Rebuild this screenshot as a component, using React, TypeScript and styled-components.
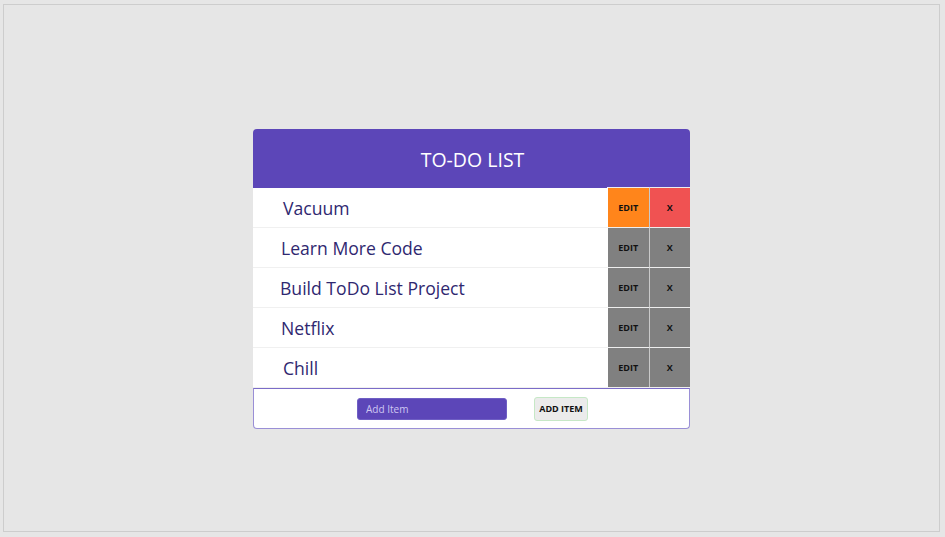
import styled, { createGlobalStyle } from 'styled-components';

const GlobalStyle = createGlobalStyle`
  html, body {
    margin: 0;
    padding: 0;
    background: #e6e6e6;
    font-family: 'Open Sans', 'Liberation Sans', sans-serif;
  }
`;

const Frame = styled.div`
  margin: 4px 0 0 3px;
  width: 937px;
  height: 528px;
  border: 1px solid #cdcdcd;
  background: #e6e6e6;
  display: flex;
  justify-content: center;
  align-items: flex-start;
  padding-top: 124px;
  box-sizing: border-box;
`;

const Card = styled.div`
  width: 437px;
  display: flex;
  flex-direction: column;
`;

const Header = styled.div`
  height: 59px;
  background: #5c46b8;
  border-radius: 4px 4px 0 0;
  color: #ffffff;
  font-size: 19.5px;
  display: flex;
  align-items: center;
  justify-content: center;
  padding: 2px 0 0 2px;
  box-sizing: border-box;
`;

const Row = styled.div`
  height: 40px;
  display: flex;
  background: #ffffff;
  border-bottom: 1px solid #f0f0f0;
  box-sizing: border-box;
`;

const ItemText = styled.div<{ $indent: number }>`
  flex: 1;
  display: flex;
  align-items: center;
  padding-left: ${(p) => p.$indent}px;
  font-size: 17.6px;
  color: #2f2870;
`;

const ActionButton = styled.button<{ $bg: string }>`
  width: 41.5px;
  height: 40px;
  margin-top: -1px;
  border: none;
  border-left: 1px solid #c9c9c9;
  border-top: 1px solid #eeeeee;
  background: ${(p) => p.$bg};
  font-family: 'Open Sans', 'Liberation Sans', sans-serif;
  font-weight: 700;
  font-size: 9px;
  color: #111111;
  padding: 0;
  box-sizing: border-box;

  &:first-of-type {
    border-left-color: #ffffff;
  }
`;

const Footer = styled.div`
  height: 41px;
  background: #ffffff;
  border: 1px solid #9a8fd6;
  border-top: 1px solid #7b6cc8;
  border-radius: 0 0 4px 4px;
  display: flex;
  align-items: center;
  justify-content: center;
  gap: 27px;
  box-sizing: border-box;
  padding-left: 2px;
`;

const AddInput = styled.input`
  width: 150px;
  height: 22px;
  background: #5c46b8;
  border: 1px solid #6f5fc4;
  border-radius: 3px;
  color: #ffffff;
  font-family: 'Open Sans', 'Liberation Sans', sans-serif;
  font-size: 10px;
  padding: 0 8px;
  box-sizing: border-box;
  outline: none;

  &::placeholder {
    color: #cfc7f2;
  }
`;

const AddButton = styled.button`
  width: 54px;
  height: 24px;
  background: #ebebeb;
  border: 1px solid #c6e8c6;
  border-radius: 3px;
  font-family: 'Open Sans', 'Liberation Sans', sans-serif;
  font-weight: 700;
  font-size: 9px;
  color: #111111;
  padding: 0;
`;

const items = [
  { text: 'Vacuum', indent: 30, active: true },
  { text: 'Learn More Code', indent: 28, active: false },
  { text: 'Build ToDo List Project', indent: 27, active: false },
  { text: 'Netflix', indent: 28, active: false },
  { text: 'Chill', indent: 30, active: false },
];

const App = () => {
  return (
    <>
      <GlobalStyle />
      <Frame>
        <Card>
          <Header>TO-DO LIST</Header>
          {items.map((item) => (
            <Row key={item.text}>
              <ItemText $indent={item.indent}>{item.text}</ItemText>
              <ActionButton $bg={item.active ? '#ff851b' : '#808080'}>EDIT</ActionButton>
              <ActionButton $bg={item.active ? '#f05252' : '#808080'}>X</ActionButton>
            </Row>
          ))}
          <Footer>
            <AddInput placeholder="Add Item" />
            <AddButton>ADD ITEM</AddButton>
          </Footer>
        </Card>
      </Frame>
    </>
  );
};

export default App;
